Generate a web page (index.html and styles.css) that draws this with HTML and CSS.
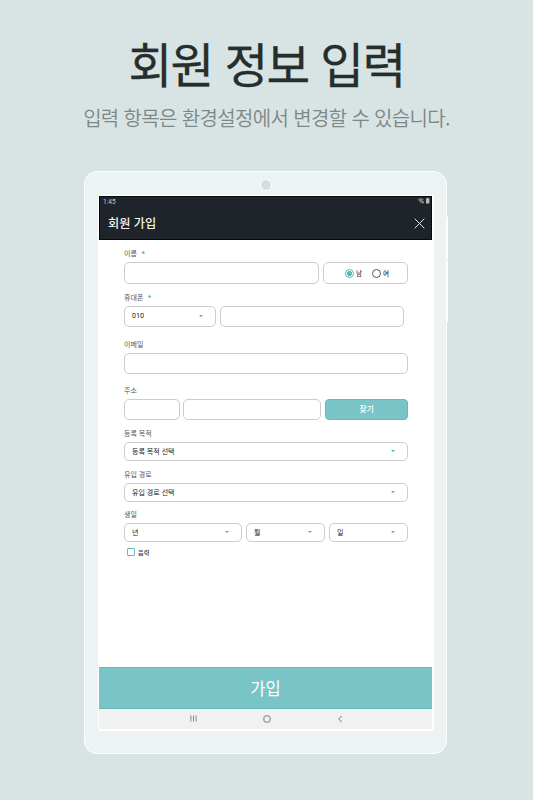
FILE: index.html
```html
<!DOCTYPE html>
<html lang="ko">
<head>
<meta charset="utf-8">
<title>회원 정보 입력</title>
<link rel="stylesheet" href="styles.css">
</head>
<body>
<h1 class="title">회원 정보 입력</h1>
<p class="subtitle">입력 항목은 환경설정에서 변경할 수 있습니다.</p>
<main class="tablet">
  <span class="side-key key-power"></span>
  <span class="side-key key-volume"></span>
  <div class="camera"></div>
  <div class="screen">
    <header class="header">
      <div class="status">
        <span>1:45</span>
        <svg class="status-icons" width="14" height="8" viewBox="0 0 14 8"><path d="M.8 2.2Q3.7.2 6.6 2.2L3.7 6.2Z" fill="#77797d"/><path d="M4.8 4.3h2v2h-2z" fill="#a0a2a5"/><path d="M9 1.5h1V.8h1.4v.7h1v5H9z" fill="#b8babc"/></svg>
      </div>
      <div class="bar">
        <h2 class="bar-title">회원 가입</h2>
        <svg class="close" width="11" height="11" viewBox="0 0 11 11"><path d="M.7.7l9.6 9.6M10.3.7L.7 10.3" stroke="#e4e5e6" stroke-width="1" fill="none"/></svg>
      </div>
    </header>
    <form class="form">
      <section class="group name">
        <div class="label">이름<span class="required">*</span></div>
        <div class="row">
          <div class="field"></div>
          <div class="field radios">
            <span class="radio selected"></span><span class="radio-text">남</span>
            <span class="radio"></span><span class="radio-text">여</span>
          </div>
        </div>
      </section>
      <section class="group phone">
        <div class="label">휴대폰<span class="required">*</span></div>
        <div class="row">
          <div class="field select prefix"><span class="digits">010</span><i class="caret"></i></div>
          <div class="field"></div>
        </div>
      </section>
      <section class="group email">
        <div class="label">이메일</div>
        <div class="row"><div class="field"></div></div>
      </section>
      <section class="group address">
        <div class="label">주소</div>
        <div class="row">
          <div class="field zip"></div>
          <div class="field"></div>
          <div class="find">찾기</div>
        </div>
      </section>
      <section class="group purpose">
        <div class="label">등록 목적</div>
        <div class="row"><div class="field select"><span>등록 목적 선택</span><i class="caret"></i></div></div>
      </section>
      <section class="group route">
        <div class="label">유입 경로</div>
        <div class="row"><div class="field select"><span>유입 경로 선택</span><i class="caret"></i></div></div>
      </section>
      <section class="group birth">
        <div class="label">생일</div>
        <div class="row">
          <div class="field select"><span>년</span><i class="caret"></i></div>
          <div class="field select part"><span>월</span><i class="caret"></i></div>
          <div class="field select part"><span>일</span><i class="caret"></i></div>
        </div>
        <div class="lunar"><span class="checkbox"></span>음력</div>
      </section>
    </form>
    <div class="join">가입</div>
    <nav class="nav">
      <svg width="7" height="7" viewBox="0 0 7 7"><path d="M.9.5v6M3.5.5v6M6.1.5v6" stroke="#888" stroke-width="1"/></svg>
      <svg width="8" height="8" viewBox="0 0 8 8"><rect x=".9" y=".9" width="6.2" height="6.2" rx="1.9" fill="none" stroke="#777"/></svg>
      <svg width="7" height="8" viewBox="0 0 7 8"><path d="M5.7 1L2.7 4l3 3" fill="none" stroke="#777"/></svg>
    </nav>
  </div>
</main>
</body>
</html>
```

FILE: styles.css
```css
* { box-sizing: border-box; }

body {
  margin: 0;
  width: 533px;
  height: 800px;
  overflow: hidden;
  background: #d8e4e3;
  font-family: "Noto Sans CJK KR", "Noto Sans", sans-serif;
  color: #333;
}

.title {
  margin: 0;
  padding-top: 31px;
  height: 100px;
  font-size: 47.5px;
  line-height: 64px;
  font-weight: 400;
  letter-spacing: -1.6px;
  text-align: center;
  white-space: nowrap;
  color: #262d2d;
  -webkit-text-stroke: .3px #262d2d;
}

.subtitle {
  margin: 0;
  height: 71px;
  font-size: 20px;
  line-height: 35px;
  font-weight: 350;
  letter-spacing: -.65px;
  text-align: center;
  white-space: nowrap;
  color: #7d8786;
}

.tablet {
  position: relative;
  width: 363px;
  height: 583px;
  margin-left: 84px;
  padding: 7px 12px 0 13px;
  border: 1px solid #fff;
  border-radius: 13px;
  background: #edf3f3;
}

.side-key {
  position: absolute;
  left: 361px;
  width: 2px;
  border-radius: 0 2px 2px 0;
  background: #fff;
}

.key-power { top: 44px; height: 44px; }
.key-volume { top: 88px; height: 63px; }

.camera {
  width: 12px;
  height: 12px;
  margin: 0 auto 4px 162px;
  border: 1.5px solid #fff;
  border-radius: 50%;
  background: #d4e0df;
}

.screen {
  display: flex;
  flex-direction: column;
  width: 336px;
  height: 536px;
  padding: 1px 2px 2px 1px;
  background: #fff;
}

.header {
  height: 44px;
  background: #1f232a;
  border: 1px solid #07090e;
  color: #f2f2f2;
}

.status {
  display: flex;
  justify-content: space-between;
  height: 9px;
  padding: 0 0 0 3px;
  font-size: 6.5px;
  line-height: 10px;
  font-family: Roboto, sans-serif;
  color: #d0d0d0;
}

.bar {
  display: flex;
  align-items: center;
  justify-content: space-between;
  height: 34px;
  padding: 0 6px 0 8px;
}

.bar-title {
  margin: 0;
  font-size: 12.2px;
  line-height: 18px;
  font-weight: 500;
}

.form { flex: 1; padding: 8px 24px 0 25px; }
.group { display: flex; flex-direction: column; gap: 4px; }

.label {
  height: 10px;
  font-size: 7px;
  line-height: 10px;
  color: #555;
  white-space: nowrap;
}

.required {
  margin-left: 4px;
  font-size: 9px;
  font-weight: 500;
  line-height: 1px;
  vertical-align: -2px;
  color: #4db5ba;
}

.row { display: flex; height: 21px; gap: 4px; }

.field {
  flex: 1;
  border: 1px solid #ccc;
  border-radius: 5px;
  background: #fff;
}

.name .row { height: 22px; }
.phone { margin-top: 8px; }
.phone .row { padding-right: 4px; }
.email { margin-top: 12px; }
.address { margin-top: 11px; }
.purpose, .route { margin-top: 8px; }
.birth { margin-top: 7px; }
.purpose .row, .route .row, .birth .row { height: 19px; }

.radios {
  flex: 0 0 85px;
  display: flex;
  align-items: center;
  padding-left: 21px;
}

.radio {
  width: 9px;
  height: 9px;
  border: 1px solid #555;
  border-radius: 50%;
}

.radio.selected {
  border-color: #55b9bd;
  background: radial-gradient(circle, #55b9bd 2.2px, #fff 2.7px);
}

.radio-text {
  width: 16px;
  margin-left: 2px;
  font-size: 6.5px;
  line-height: 10px;
  font-weight: 500;
}

.select {
  display: flex;
  align-items: center;
  justify-content: space-between;
  padding: 0 12px 1px 7px;
  font-size: 7px;
  line-height: 12px;
  color: #222;
}

.digits { font-family: Roboto, sans-serif; font-size: 7.2px; }

.caret {
  width: 0;
  height: 0;
  border: 2px solid transparent;
  border-top: 2.5px solid #45b4bb;
  border-bottom: 0;
}

.prefix { flex: 0 0 92px; }
.zip { flex: 0 0 56px; margin-right: -1px; }
.part { flex: 0 0 79px; }

.find {
  width: 83px;
  border: 1px solid #68b7ba;
  border-radius: 4px;
  background: #79c4c7;
  color: #fff;
  font-size: 8px;
  line-height: 18px;
  font-weight: 500;
  text-align: center;
}

.lunar {
  display: flex;
  align-items: center;
  gap: 3px;
  height: 10px;
  margin-top: 1px;
  padding-left: 3px;
  font-size: 6.2px;
  font-weight: 500;
}

.checkbox { width: 8px; height: 8px; border: 1px solid #65b9c0; border-radius: 1px; }

.join {
  height: 42px;
  border-top: 1px solid #67b8ba;
  border-bottom: 1px solid #67b8ba;
  background: #79c4c7;
  color: #fff;
  font-size: 16.5px;
  line-height: 40px;
  text-align: center;
}

.nav {
  display: flex;
  justify-content: space-between;
  height: 20px;
  padding: 6px 89px 0 91px;
  background: #f1f1f1;
}
```
